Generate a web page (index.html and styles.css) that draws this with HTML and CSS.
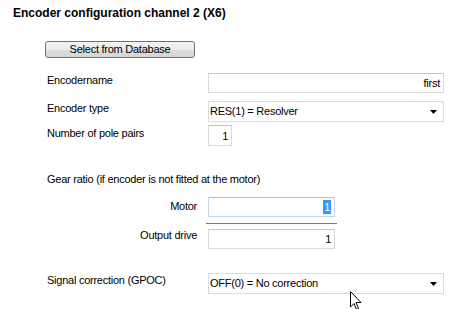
FILE: index.html
```html
<!DOCTYPE html>
<html lang="en">
<head>
    <meta charset="UTF-8">
    <title>Encoder configuration</title>
    <link rel="stylesheet" href="styles.css">
</head>
<body>
<div class="page">
    <h1 class="title">Encoder configuration channel 2 (X6)</h1>

    <div class="btn">Select from Database</div>

    <div class="row row-name">
        <div class="label">Encodername</div>
        <div class="box wide right">first</div>
    </div>
    <div class="row row-type">
        <div class="label">Encoder type</div>
        <div class="combo">
            <span>RES(1) = Resolver</span>
            <svg class="arrow" width="7" height="4" viewBox="0 0 7 4"><polygon points="0,0 7,0 3.5,4" fill="#000"/></svg>
        </div>
    </div>
    <div class="row row-poles">
        <div class="label label-low">Number of pole pairs</div>
        <div class="box small right">1</div>
    </div>

    <div class="gear">Gear ratio (if encoder is not fitted at the motor)</div>

    <div class="ratio">
        <div class="row row-motor">
            <div class="rlabel rlabel-low">Motor</div>
            <div class="box mid right focus"><span class="sel">1</span></div>
        </div>
        <div class="sep"></div>
        <div class="row row-out">
            <div class="rlabel">Output drive</div>
            <div class="box mid right">1</div>
        </div>
    </div>

    <div class="row row-signal">
        <div class="label">Signal correction (GPOC)</div>
        <div class="combo">
            <span>OFF(0) = No correction</span>
            <svg class="arrow" width="7" height="4" viewBox="0 0 7 4"><polygon points="0,0 7,0 3.5,4" fill="#000"/></svg>
        </div>
    </div>
</div>

<svg class="cursor" width="12" height="19" viewBox="0 0 12 19">
    <path d="M0.5,0.5 L0.5,16 L4,12.5 L6.5,18.5 L8.5,17.5 L6,11.5 L11,11.5 Z" fill="#fff" stroke="#000" stroke-width="1"/>
</svg>
</body>
</html>
```

FILE: styles.css
```css
* {
    margin: 0;
    padding: 0;
    box-sizing: border-box;
}

html, body {
    width: 455px;
    height: 309px;
    overflow: hidden;
    background: #fff;
}

body {
    font-family: "Liberation Sans", Arial, sans-serif;
    font-size: 11px;
    line-height: 13px;
    letter-spacing: -0.25px;
    color: #000;
    position: relative;
}

.page {
    padding: 6px 0 0 13px;
}

.title {
    font-size: 12px;
    line-height: 14px;
    font-weight: bold;
    letter-spacing: 0;
}

.btn {
    margin: 21px 0 0 32px;
    width: 150px;
    height: 17px;
    border: 1px solid #707070;
    border-radius: 3px;
    background: linear-gradient(#f2f2f2, #ebebeb 50%, #dddddd 50%, #d6d6d6);
    text-align: center;
    line-height: 15px;
}

.row {
    display: flex;
    align-items: flex-start;
    margin-left: 34px;
}

.label {
    width: 161px;
    padding-top: 1px;
}

.label-low {
    padding-top: 2px;
}

.row-name {
    margin-top: 15px;
}

.row-type {
    margin-top: 8px;
}

.row-poles {
    margin-top: 3px;
}

.row-signal {
    margin-top: 24px;
}

.box {
    height: 20px;
    border: 1px solid #d9d9d9;
    border-top-color: #c4c4c4;
    padding: 2px 3px 0;
    line-height: 15px;
}

.right {
    text-align: right;
}

.wide {
    width: 236px;
}

.small {
    width: 24px;
    height: 21px;
    padding-top: 3px;
}

.mid {
    width: 127px;
}

.focus {
    border-color: #c5d7ea;
    border-top-color: #a9c2dd;
}

.sel {
    background: #3399ff;
    color: #fff;
    display: inline-block;
    padding: 0 1px;
    line-height: 14px;
}

.combo {
    width: 236px;
    height: 21px;
    border: 1px solid #dcdcdc;
    display: flex;
    align-items: center;
    justify-content: space-between;
    padding: 0 6px 0 1px;
}

.gear {
    margin: 27px 0 0 34px;
}

.ratio {
    margin-top: 11px;
}

.rlabel {
    width: 150px;
    text-align: right;
    margin-right: 11px;
}

.rlabel-low {
    padding-top: 3px;
}

.sep {
    margin: 6px 0 0 193px;
    width: 131px;
    border-top: 1px solid #7a7a7a;
    height: 6px;
}

.cursor {
    position: absolute;
    left: 350px;
    top: 291px;
}
```
